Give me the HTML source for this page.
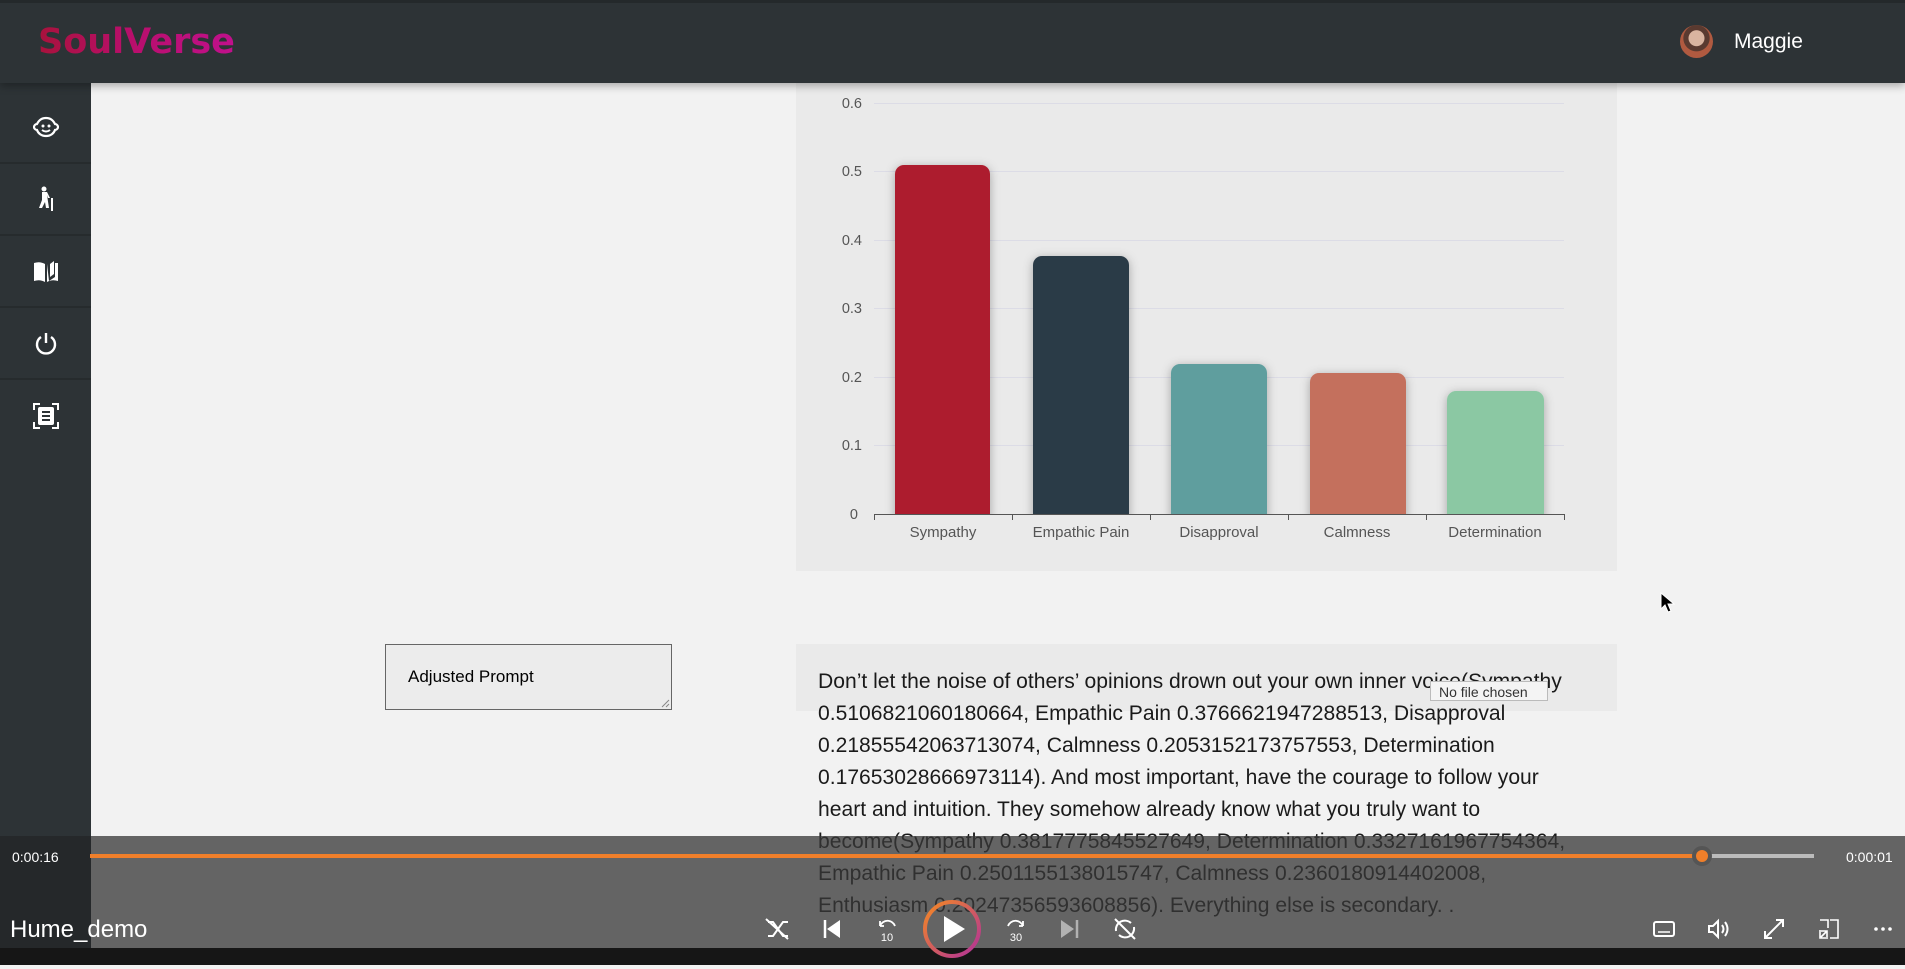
<!DOCTYPE html>
<html><head><meta charset="utf-8"><style>
*{margin:0;padding:0;box-sizing:border-box}
body{width:1905px;height:965px;overflow:hidden;background:#f2f2f2;font-family:"Liberation Sans",sans-serif;position:relative}
.hdr{position:absolute;left:0;top:0;width:1905px;height:83px;background:#2d3336;border-top:3px solid #24292b;box-shadow:0 3px 8px rgba(0,0,0,.3);z-index:3}
.logo{position:absolute;left:38px;top:19px;font:bold 35px "DejaVu Sans",sans-serif;background:linear-gradient(90deg,#a8123c,#b80f6a 45%,#c0108c);-webkit-background-clip:text;color:transparent}
.side{position:absolute;left:0;top:83px;width:91px;height:882px;background:#2d3336;z-index:2;padding-top:9px}
.side .it{height:72px;border-bottom:2px solid #262b2d;display:flex;align-items:center;justify-content:center}
.abs{position:absolute}
.panel{position:absolute;left:796px;top:83px;width:821px;height:488px;background:#eaeaea}
.txtp{position:absolute;left:796px;top:644px;width:821px;height:67px;background:#eaeaea}
.txt{position:absolute;left:818px;top:666px;width:770px;font-size:21.1px;line-height:32px;color:#1a1a1a}
.overlay{position:absolute;left:0;top:836px;width:1905px;height:112px;background:rgba(55,55,55,.76);z-index:4}
.bot{position:absolute;left:0;top:948px;width:1905px;height:17px;background:#161616;z-index:4}
.w{color:#fff}
</style></head><body>
<div class="hdr">
<div class="logo">SoulVerse</div>
<div class="abs" style="left:1680px;top:22px;width:33px;height:33px;border-radius:50%;background:radial-gradient(circle at 50% 40%,#d9b4a0 0 30%,#5a3a30 32% 50%,#b05a40 52%)"></div>
<div class="abs w" style="left:1734px;top:27px;font-size:21px">Maggie</div>
</div>
<div class="side">
<div class="it"><svg width="26" height="22" viewBox="0 0 26 22"><path d="M13 2C7 2 5 6 4 8 2 8 1 10 1 11s1 3 3 3c1 3 4 6 9 6s8-3 9-6c2 0 3-2 3-3s-1-3-3-3c-1-2-3-6-9-6z" fill="none" stroke="#fff" stroke-width="2.2"/><circle cx="10" cy="10" r="1.5" fill="#fff"/><circle cx="16" cy="10" r="1.5" fill="#fff"/><path d="M9 14q4 3 8 0" stroke="#fff" stroke-width="2" fill="none"/></svg></div>
<div class="it"><svg width="18" height="26" viewBox="0 0 18 26"><circle cx="7" cy="3" r="2.5" fill="#fff"/><path d="M5 6h5l3 6h-2l-1-3 2 13H9l-1-6-3 6H2l3-8z" fill="#fff"/><rect x="14" y="12" width="2" height="13" fill="#fff"/></svg></div>
<div class="it"><svg width="26" height="24" viewBox="0 0 26 24"><path d="M1 4q6-2 11 1v18q-5-3-11-1z" fill="#fff"/><path d="M14 5v18q5-3 11-1V4l-3 0v14l-6 4" fill="#fff"/><path d="M17 18V5l4-3v13z" fill="#fff"/></svg></div>
<div class="it"><svg width="24" height="24" viewBox="0 0 24 24"><path d="M7 6a9 9 0 1 0 10 0" stroke="#fff" stroke-width="2.4" fill="none"/><path d="M12 2v10" stroke="#fff" stroke-width="2.4"/></svg></div>
<div class="it" style="border:0"><svg width="26" height="26" viewBox="0 0 26 26"><path d="M1 7V1h6M19 1h6v6M25 19v6h-6M7 25H1v-6" stroke="#fff" stroke-width="2" fill="none"/><rect x="5" y="4" width="16" height="18" rx="2" fill="#fff"/><path d="M9 9h8M9 13h8M9 17h8" stroke="#2d3336" stroke-width="2"/></svg></div>
</div>

<div class="panel"></div>
<svg class="abs" style="left:796px;top:83px" width="821" height="488">
<g font-family="Liberation Sans" font-size="14.5" fill="#555" text-anchor="end">
<text x="66" y="25">0.6</text><text x="66" y="93">0.5</text><text x="66" y="162">0.4</text><text x="66" y="230">0.3</text><text x="66" y="299">0.2</text><text x="66" y="367">0.1</text><text x="62" y="436">0</text>
</g>
<g stroke="#dcdce6" stroke-width="1">
<line x1="78" y1="20.5" x2="768" y2="20.5"/><line x1="78" y1="88.5" x2="768" y2="88.5"/><line x1="78" y1="157.5" x2="768" y2="157.5"/><line x1="78" y1="225.5" x2="768" y2="225.5"/><line x1="78" y1="294.5" x2="768" y2="294.5"/><line x1="78" y1="362.5" x2="768" y2="362.5"/>
</g>
<defs><filter id="s" x="-30%" y="-10%" width="160%" height="130%"><feDropShadow dx="0" dy="2" stdDeviation="5" flood-opacity=".3"/></filter></defs>
<g filter="url(#s)">
<rect x="99" y="82" width="95" height="434" rx="9" fill="#ad1f2d"/>
<rect x="237" y="173" width="96" height="343" rx="9" fill="#2b3a47"/>
<rect x="375" y="281" width="96" height="235" rx="9" fill="#5e9e9e"/>
<rect x="514" y="290" width="96" height="226" rx="9" fill="#c4705d"/>
<rect x="651" y="308" width="97" height="208" rx="9" fill="#8bc8a3"/>
</g>
<rect x="70" y="432" width="710" height="60" fill="#eaeaea"/>
<line x1="78" y1="431.5" x2="768" y2="431.5" stroke="#555"/>
<g stroke="#555"><line x1="78.5" y1="431" x2="78.5" y2="437"/><line x1="216.5" y1="431" x2="216.5" y2="437"/><line x1="354.5" y1="431" x2="354.5" y2="437"/><line x1="492.5" y1="431" x2="492.5" y2="437"/><line x1="630.5" y1="431" x2="630.5" y2="437"/><line x1="768.5" y1="431" x2="768.5" y2="437"/></g>
<g font-family="Liberation Sans" font-size="15" fill="#555" text-anchor="middle">
<text x="147" y="454">Sympathy</text><text x="285" y="454">Empathic Pain</text><text x="423" y="454">Disapproval</text><text x="561" y="454">Calmness</text><text x="699" y="454">Determination</text>
</g>
</svg>

<div class="abs" style="left:385px;top:644px;width:287px;height:66px;border:1px solid #666;background:#ececec;font-size:17px;padding:22px 0 0 22px">Adjusted Prompt<svg class="abs" style="right:1px;bottom:1px" width="9" height="9"><path d="M8 1L1 8M8 5L5 8" stroke="#888"/></svg></div>
<div class="txtp"></div>
<div class="txt">Don’t let the noise of others’ opinions drown out your own inner voice(Sympathy 0.5106821060180664, Empathic Pain 0.3766621947288513, Disapproval 0.21855542063713074, Calmness 0.2053152173757553, Determination 0.17653028666973114). And most important, have the courage to follow your heart and intuition. They somehow already know what you truly want to become(Sympathy 0.3817775845527649, Determination 0.3327161967754364, Empathic Pain 0.2501155138015747, Calmness 0.2360180914402008, Enthusiasm 0.20247356593608856). Everything else is secondary. .</div>
<div class="abs" style="left:1430px;top:681px;width:118px;height:20px;background:#f4f4f4;border:1px solid #bbb;font-size:14px;color:#333;padding:2px 0 0 8px">No file chosen</div>
<svg class="abs" style="left:1660px;top:592px" width="16" height="22"><path d="M1 1v16l4-4 3 7 3-1-3-7h6z" fill="#000" stroke="#fff"/></svg>

<div class="overlay">
<div class="abs" style="left:0;top:0;width:91px;height:112px;background:rgba(20,25,27,.45)"></div>
<div class="abs w" style="left:12px;top:13px;font-size:14px">0:00:16</div>
<div class="abs w" style="left:1846px;top:13px;font-size:14px">0:00:01</div>
<div class="abs" style="left:90px;top:18px;width:1612px;height:4px;background:#f07f2a"></div>
<div class="abs" style="left:1702px;top:18px;width:112px;height:4px;background:#bbb"></div>
<div class="abs" style="left:1692px;top:10px;width:20px;height:20px;border-radius:50%;background:#555"></div>
<div class="abs" style="left:1696px;top:14px;width:12px;height:12px;border-radius:50%;background:#f07f2a"></div>
<div class="abs w" style="left:10px;top:80px;font-size:24px">Hume_demo</div>
<svg class="abs" style="left:0;top:0" width="1905" height="112" fill="none" stroke="#fff" stroke-width="2">
<g transform="translate(778,93)"><path d="M-10-7h5l10 14h5M-10 7h5l10-14h5M-12-10l22 20"/></g>
<g transform="translate(832,93)"><path d="M-7-9v18" stroke-width="2.5"/><path d="M8-9v18L-5 0z" fill="#fff" stroke="none"/></g>
<g transform="translate(887,93)"><path d="M-7-3a8 8 0 0 1 15 0M-7-3l0-5M-7-3l4 0" stroke-width="1.8"/><text x="0" y="12" font-size="11" fill="#fff" stroke="none" text-anchor="middle" font-family="Liberation Sans">10</text></g>
<g transform="translate(1016,93)"><path d="M7-3a8 8 0 0 0-15 0M7-3l0-5M7-3l-4 0" stroke-width="1.8"/><text x="0" y="12" font-size="11" fill="#fff" stroke="none" text-anchor="middle" font-family="Liberation Sans">30</text></g>
<g transform="translate(1069,93)" opacity=".5"><path d="M-8-9v18L5 0z" fill="#fff" stroke="none"/><path d="M8-9v18" stroke-width="2.5"/></g>
<g transform="translate(1125,93)"><path d="M-9 2a9 9 0 0 1 15-8M9-2a9 9 0 0 1-15 8M-10-10l20 20"/></g>
<g transform="translate(1664,93)"><rect x="-10" y="-7" width="20" height="14" rx="2"/><path d="M-6 3h12" stroke-width="1.5"/></g>
<g transform="translate(1719,93)"><path d="M-10-3h4l5-5v16l-5-5h-4z"/><path d="M3-4q3 4 0 8M6-7q5 7 0 14"/></g>
<g transform="translate(1774,93)"><path d="M-9 9L9-9M2-9h7v7M-9 2v7h7"/></g>
<g transform="translate(1829,93)"><path d="M-9-9h8v8M1-9h8v18h-8M-9 1v8h8M-8 8l6-6M-2 8V2h-6" stroke-width="1.6"/></g>
<g fill="#fff" stroke="none"><circle cx="1876" cy="93" r="1.8"/><circle cx="1883" cy="93" r="1.8"/><circle cx="1890" cy="93" r="1.8"/></g>
</svg>
</div>
<div class="bot"></div>
<svg class="abs" style="left:912px;top:889px;z-index:5" width="80" height="80">
<defs><linearGradient id="g" x1="0" y1="0" x2="1" y2="1"><stop offset="0" stop-color="#f58a22"/><stop offset="1" stop-color="#b0309a"/></linearGradient></defs>
<circle cx="40" cy="40" r="27" fill="none" stroke="url(#g)" stroke-width="4"/>
<path d="M32 27v26l21-13z" fill="#fff"/>
</svg>
</body></html>
